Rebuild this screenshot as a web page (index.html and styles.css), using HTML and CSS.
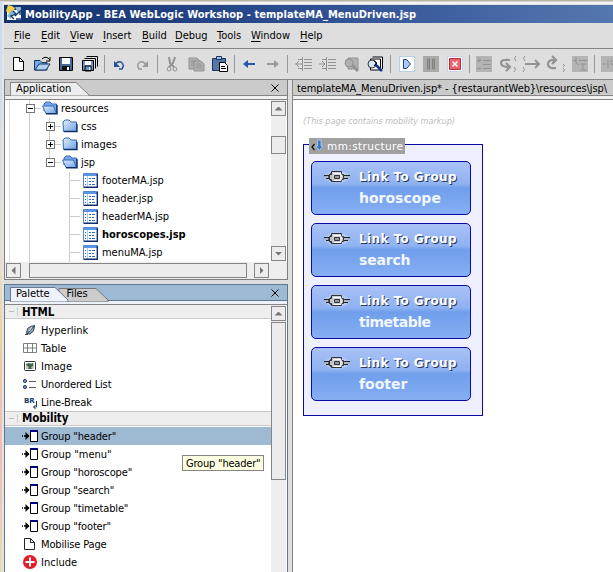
FILE: index.html
```html
<!DOCTYPE html>
<html lang="en">
<head>
<meta charset="utf-8">
<title>MobilityApp - BEA WebLogic Workshop</title>
<link rel="stylesheet" href="styles.css">
</head>
<body>
<svg class="defs" width="0" height="0">
  <defs>
    <linearGradient id="fold" x1="0" y1="0" x2="1" y2="1"><stop offset="0" stop-color="#e2efff"/><stop offset="1" stop-color="#6da0e4"/></linearGradient>
    <radialGradient id="halo"><stop offset="0" stop-color="#fff" stop-opacity=".9"/><stop offset="1" stop-color="#fff" stop-opacity="0"/></radialGradient>
    <symbol id="closed" viewBox="0 0 16 14"><path d="M1 3l2-2h4l2 2h5.500v9.500h-13z" fill="url(#fold)" stroke="#3868b4"/><path d="M2 12.500h13V5" fill="none" stroke="#102c68" stroke-width="1.300"/></symbol>
    <symbol id="open" viewBox="0 0 16 14"><path d="M2 10V3l2-2h4l2 2h4.500v9" fill="#76a7ea" stroke="#3868b4"/><path d="M.5 5h11l3 7.500H4z" fill="url(#fold)" stroke="#3868b4"/><path d="M4 12.800h11V4" fill="none" stroke="#102c68" stroke-width="1.400"/></symbol>
    <symbol id="jsp" viewBox="0 0 15 15"><path d="M.5.500h14v14H.5z" fill="#fff" stroke="#5588d0"/><path d="M1 1h13v2H1z" fill="#5a96e8"/><path d="M4.500 3v11" stroke="#a9c8f2"/><path d="M2 5.500h1m-1 3h1m-1 3h1M6 5.500h2m-2 3h2m-2 3h2M9 5.500h3m-3 3h2m-2 3h3" stroke="#2768cc"/><path d="M14.300 1v13.300H1" fill="none" stroke="#122c70" stroke-width="1.400"/></symbol>
    <symbol id="group" viewBox="0 0 18 14"><path d="M0 7h1m1 0h5" stroke="#000" stroke-width="1.500"/><path d="M3.500 3v8L7.500 7z" fill="#000"/><path d="M8.500 2v10.500h7V2" fill="#fff" stroke="#000"/><path d="M8 2h8" stroke="#000080" stroke-width="2"/></symbol>
    <symbol id="chain" viewBox="0 0 28 14"><ellipse cx="14" cy="7" rx="14" ry="7" fill="url(#halo)"/><path d="M1 5.500h8m10 0h8M3 8.500h6m10 0h6" stroke="#222"/><path d="M0 7h28" stroke="#a5a5a5"/><path d="M9.500 3.500h-2L5.500 7l2 3.500h2" fill="#aaa" stroke="#333"/><path d="M8.500 4.500v-3h10v3h2v5h-2v2h-10v-2h-2v-5z" fill="#c8cbd2" fill-opacity=".75" stroke="#333"/><path d="M10 3.500h8v7h-7" fill="none" stroke="#fff"/><path d="M11.500 5.500h5v3h-5z" fill="#999" stroke="#333"/></symbol>
  </defs>
</svg>
<div class="window">
  <header class="titlebar">
    <svg width="16" height="16" viewBox="0 0 16 16"><path d="M1 5h14v10H1z" fill="#fff"/><path d="M2 0l4 1 3 2-2 5-4 1-3-3z" fill="#f3cf45"/><path d="M9 2h6v6h-3z" fill="#8fb9de"/><path d="M6 5l5 4-4 1-2 4-4-3z" fill="#83b3dc"/><path d="M7 6l3 3-5 2 3 3m2 0h5M9 11l5-5v4" fill="none" stroke="#153d72" stroke-width="1.300"/></svg>
    <span class="window-title">MobilityApp - BEA WebLogic Workshop - templateMA_MenuDriven.jsp</span>
  </header>
  <nav class="menubar">
    <span class="m-file"><u>F</u>ile</span><span class="m-edit"><u>E</u>dit</span><span class="m-view"><u>V</u>iew</span><span class="m-insert"><u>I</u>nsert</span><span class="m-build"><u>B</u>uild</span><span class="m-debug"><u>D</u>ebug</span><span class="m-tools"><u>T</u>ools</span><span class="m-window"><u>W</u>indow</span><span class="m-help"><u>H</u>elp</span>
  </nav>
  <div class="toolbar">
    <svg class="tool" viewBox="0 0 24 24"><path d="M7.500 5.500h6l4 4v9h-10z" fill="#fff" stroke="#000"/><path d="M13.500 5.500v4h4" fill="none" stroke="#000"/></svg>
    <svg class="tool" viewBox="0 0 24 24"><path d="M4.500 18V8.500H10l2 2h5V18z" fill="#77a7e4" stroke="#15345f"/><path d="M5 18l4-6h11l-4 6z" fill="#b2d0f5" stroke="#15345f"/><path d="M12 7q4-4 8 1m0-3v4h-4" fill="none" stroke="#000"/></svg>
    <svg class="tool" viewBox="0 0 24 24"><path d="M5.500 5.500h13v13h-13z" fill="#46699c" stroke="#000"/><path d="M8 6h8v6H8z" fill="#fff"/><path d="M8 14h8v5H8z" fill="#111"/><path d="M13 15h2v3h-2z" fill="#fff"/></svg>
    <svg class="tool" viewBox="0 0 24 24"><path d="M8.500 4.500h11v10M6.500 6.500h11v10" fill="none" stroke="#000"/><path d="M4.500 8.500h11v10h-11z" fill="#7094c4" stroke="#000"/><path d="M7 9h6v4H7zM11 15h2v3h-2z" fill="#fff"/><path d="M7 14h6v5H7z" fill="none" stroke="#000"/></svg>
    <i class="sep"></i>
    <svg class="tool" viewBox="0 0 24 24"><path d="M8 13q2-4 6-3 4 3 1 7h-3" fill="none" stroke="#234e99" stroke-width="1.400"/><path d="M7 9v6h6z" fill="#234e99"/></svg>
    <svg class="tool" viewBox="0 0 24 24"><path d="M15 13q-2-4-6-3-4 3-1 7h3" fill="none" stroke="#999" stroke-width="1.500"/><path d="M17 9v6h-6z" fill="#999"/></svg>
    <i class="sep"></i>
    <svg class="tool gray" viewBox="0 0 24 24"><path d="M9 5l1 6 4 4m1-10l-2 6-4 4" stroke-width="2"/><circle cx="9" cy="17" r="2"/><circle cx="15" cy="17" r="2"/></svg>
    <svg class="tool gray" viewBox="0 0 24 24"><path class="gfill" d="M5 6h8l3 3v8H5z"/><path class="gfill" d="M10 9h7l3 3v7H10z"/><path d="M7 9h5m-5 2h3m-3 2h3m2-1h5m-5 2h6m-6 2h6"/></svg>
    <svg class="tool" viewBox="0 0 24 24"><path d="M4.500 6.500h13v12h-13z" fill="#5577a8" stroke="#15345f"/><path d="M8.500 4.500h5v3h-5z" fill="#a8c4e2" stroke="#15345f"/><path d="M11.500 10.500h5l3 3v6h-8z" fill="#fff" stroke="#000"/><path d="M13 14.500h4m-4 2h5" stroke="#000"/></svg>
    <i class="sep"></i>
    <svg class="tool" viewBox="0 0 24 24"><path d="M18 12H8" stroke="#225ab0" stroke-width="2"/><path d="M6 12l5-4v8z" fill="#225ab0"/></svg>
    <svg class="tool" viewBox="0 0 24 24"><path d="M6 12h10" stroke="#999" stroke-width="2"/><path d="M18 12l-5-4v8z" fill="#999"/></svg>
    <i class="sep wide"></i>
    <svg class="tool gray" viewBox="0 0 24 24"><path d="M6 7.500h4m2 0h8m-8 3h8m-8 3h8M6 16.500h4m2 0h8M10.500 5v14M3 12h7M7 9l-3 3 3 3"/></svg>
    <svg class="tool gray" viewBox="0 0 24 24"><path d="M6 7.500h4m2 0h8m-8 3h8m-8 3h8M6 16.500h4m2 0h8M10.500 5v14M3 12h6M6 9l3 3-3 3"/></svg>
    <svg class="tool gray" viewBox="0 0 24 24"><path class="gfill" d="M8 6h10v11H8z"/><circle class="gfill" cx="9" cy="11" r="4"/><path d="M12 13l6 6" stroke-width="3"/></svg>
    <svg class="tool" viewBox="0 0 24 24"><path d="M8.500 5h10v12M6.500 7h10v11h-10z" fill="#fff" stroke="#000"/><circle cx="8" cy="12" r="4" fill="#d7e7fa" stroke="#333"/><path d="M11 12l7 7" stroke="#16338c" stroke-width="2.500"/><path d="M10 9l3 2-3 3" fill="none" stroke="#000"/></svg>
    <i class="sep wide"></i>
    <svg class="tool" viewBox="0 0 24 24"><path d="M4.500 4.500h15v15h-15z" fill="#fff" stroke="#b7cfe2"/><path d="M8.500 7.500h3l4 4.500-4 4.500h-3z" fill="#a9cbf5" stroke="#173e87"/></svg>
    <svg class="tool" viewBox="0 0 24 24"><path d="M4 4h16v16H4z" fill="#aaa"/><path d="M8.500 7h2v10h-2zm5 0h2v10h-2z" fill="#999" stroke="#808080"/></svg>
    <svg class="tool" viewBox="0 0 24 24"><path d="M4.500 4.500h15v15h-15z" fill="#fff" stroke="#c9d4df"/><path d="M6.500 6.500h11v11h-11z" fill="#f0606d" stroke="#b92d40"/><path d="M9.500 9.500l5 5m0-5l-5 5" stroke="#fff" stroke-width="1.500"/></svg>
    <i class="sep"></i>
    <svg class="tool gray" viewBox="0 0 24 24"><path class="box" d="M4 4h16v16H4z"/><path d="M5 8.500h4m2 0h8m-8 4h8m-14 4h4m2 0h8M6 6l3 2-3 2"/></svg>
    <svg class="tool gray" viewBox="0 0 24 24"><path d="M14 8q-9-1-9 3t8 4m-3-4l4 4-4 4" stroke-width="2.200"/><path d="M20 4q-3 2 0 5m-2 6q3 2 0 5"/></svg>
    <svg class="tool gray" viewBox="0 0 24 24"><path d="M5 12h14m-4-4l4 4-4 4" stroke-width="2"/><path d="M5 4q-3 2 0 5m-2 6q3 2 0 5"/></svg>
    <svg class="tool gray" viewBox="0 0 24 24"><path d="M12 16q-8 1-8-4t8-4m-4-4l4 4-4 4" stroke-width="2.200"/><path d="M19 12q3 1 0 3m0 1q3 2 0 4"/></svg>
    <svg class="tool gray" viewBox="0 0 24 24"><path class="box" d="M4 4h16v16H4z"/><path d="M5 8.500h4m2 0h8M8 5v6l3 2m1-1h6m-3 0v6m-3 0h6"/></svg>
    <i class="sep"></i>
    <svg class="tool gray" viewBox="0 0 24 24"><path class="box" d="M4 4h16v16H4z"/><path d="M6 12h3m2-4v8m2-4h5m-5-3h5"/></svg>
  </div>
  <div class="workspace">
    <aside class="sidebar">
      <section class="pane application">
        <div class="tabs">
          <svg class="tabshape" viewBox="0 0 280 20"><path d="M5.500 20V6.500H71L84 19v1z" fill="#eee" stroke="#858585"/></svg>
          <span class="tabtext t-app">Application</span>
          <svg class="close" viewBox="0 0 8 8"><path d="M.5.500l7 7m0-7l-7 7" stroke="#000"/></svg>
        </div>
        <div class="strip"></div>
        <div class="tree-area">
          <div class="tree">
            <div class="row r1"><i class="toggle"></i><svg class="node"><use href="#open"/></svg><span>resources</span></div>
            <div class="row r2"><i class="toggle plus"></i><svg class="node"><use href="#closed"/></svg><span>css</span></div>
            <div class="row r2"><i class="toggle plus"></i><svg class="node"><use href="#closed"/></svg><span>images</span></div>
            <div class="row r2"><i class="toggle"></i><svg class="node"><use href="#open"/></svg><span>jsp</span></div>
            <div class="row r3"><svg class="page"><use href="#jsp"/></svg><span>footerMA.jsp</span></div>
            <div class="row r3"><svg class="page"><use href="#jsp"/></svg><span>header.jsp</span></div>
            <div class="row r3"><svg class="page"><use href="#jsp"/></svg><span>headerMA.jsp</span></div>
            <div class="row r3"><svg class="page"><use href="#jsp"/></svg><span class="bold">horoscopes.jsp</span></div>
            <div class="row r3"><svg class="page"><use href="#jsp"/></svg><span>menuMA.jsp</span></div>
          </div>
          <div class="vscroll"><b class="btn up"></b><b class="thumb small"></b><b class="btn down"></b></div>
        </div>
        <div class="hscroll"><b class="btn left"></b><b class="hthumb"></b><b class="btn right"></b></div>
      </section>
      <section class="pane palette">
        <div class="tabs">
          <svg class="tabshape" viewBox="0 0 280 20"><path d="M54 20V6.500h37L103 18v2z" fill="#ccc" stroke="#777"/><path d="M5.500 20V5.500H50L63 18v2z" fill="#eef2fb" stroke="#68798c"/></svg>
          <span class="tabtext t-palette">Palette</span><span class="tabtext t-files">Files</span>
          <svg class="close" viewBox="0 0 8 8"><path d="M.5.500l7 7m0-7l-7 7" stroke="#000"/></svg>
        </div>
        <div class="strip"></div>
        <div class="palette-area">
          <div class="items">
            <div class="category"><i></i><span>HTML</span></div>
            <div class="item first"><svg viewBox="0 0 18 16"><path d="M4.500 11.500l1-5 4-2.500h3l-1 5-3.500 3z" fill="#8ba0b2" stroke="#354454"/><path d="M5 12l8-9M3 12.500h3" stroke="#354454"/><path d="M7 9l3-4" stroke="#eee"/></svg><span>Hyperlink</span></div>
            <div class="item"><svg viewBox="0 0 18 16"><path d="M1.500 3.500h13v9h-13zM1.500 8h13M5.500 3.500v9m5-9v9" fill="#fff" stroke="#7a8580"/></svg><span>Table</span></div>
            <div class="item"><svg viewBox="0 0 18 16"><rect x="2.500" y="3.500" width="11" height="9" rx="1" fill="#fff" stroke="#333"/><path d="M4 5h8v6H4z" fill="#bac9bb"/><path d="M5 6l2-1 2 1 2-1v3L9 9l1 2H6l1-2-3-2z" fill="#42604b"/></svg><span>Image</span></div>
            <div class="item"><svg viewBox="0 0 18 16"><circle cx="3" cy="5" r="1.600" fill="#7992b5" stroke="#28446f"/><circle cx="3" cy="11" r="1.600" fill="#7992b5" stroke="#28446f"/><path d="M7 5.500h7m-7 6h7" stroke="#555"/></svg><span class="ul-label">Unordered List</span></div>
            <div class="item"><svg class="br" viewBox="0 0 18 16"><text x="2" y="9">BR</text><path d="M14.500 7v6h-3m2-2l-2 2 2 2" fill="none" stroke="#17396b"/></svg><span class="ul-label">Line-Break</span></div>
            <div class="category second"><i></i><span>Mobility</span></div>
            <div class="item selected"><svg class="g"><use href="#group"/></svg><span class="group">Group "header"</span></div>
            <div class="item"><svg class="g"><use href="#group"/></svg><span>Group "menu"</span></div>
            <div class="item"><svg class="g"><use href="#group"/></svg><span class="group">Group "horoscope"</span></div>
            <div class="item"><svg class="g"><use href="#group"/></svg><span class="group">Group "search"</span></div>
            <div class="item"><svg class="g"><use href="#group"/></svg><span class="group">Group "timetable"</span></div>
            <div class="item"><svg class="g"><use href="#group"/></svg><span class="group">Group "footer"</span></div>
            <div class="item"><svg viewBox="0 0 18 16"><path d="M2.500 2.500h6l4 4v7h-10zM8.500 2.500v4h4" fill="#fff" stroke="#222"/></svg><span class="group">Mobilise Page</span></div>
            <div class="item"><svg viewBox="0 0 18 16"><circle cx="8" cy="8" r="7" fill="#e31d27"/><path d="M3.500 8h9M8 3.500v9" stroke="#fff" stroke-width="2"/></svg><span>Include</span></div>
          </div>
          <div class="vscroll"><b class="btn up"></b><b class="thumb large"></b></div>
          <div class="tooltip">Group "header"</div>
        </div>
      </section>
    </aside>
    <main class="editor">
      <div class="doc-title"><span>templateMA_MenuDriven.jsp* - {restaurantWeb}\resources\jsp\</span></div>
      <div class="strip"></div>
      <div class="canvas">
        <div class="hint">(This page contains mobility markup)</div>
        <div class="structure">
          <div class="tag"><svg width="14" height="14" viewBox="0 0 14 14"><path d="M4.500 5L2 8l2.500 3m3-3H10" fill="none" stroke="#111" stroke-width="1.300"/><path d="M7.500 1h3.500v6h2l-3.700 4.500L5.500 7h2z" fill="#3979cc" stroke="#c5dafa" stroke-width=".7"/></svg><span>mm:structure</span></div>
          <div class="card"><svg><use href="#chain"/></svg><div><p>Link To Group</p><h2>horoscope</h2></div></div>
          <div class="card"><svg><use href="#chain"/></svg><div><p>Link To Group</p><h2 class="tight">search</h2></div></div>
          <div class="card"><svg><use href="#chain"/></svg><div><p>Link To Group</p><h2 class="tighter">timetable</h2></div></div>
          <div class="card"><svg><use href="#chain"/></svg><div><p>Link To Group</p><h2>footer</h2></div></div>
        </div>
      </div>
    </main>
  </div>
</div>
</body>
</html>
```

FILE: styles.css
```css
* { box-sizing: border-box; }
body { margin: 0; width: 613px; height: 572px; overflow: hidden; padding: 1px 0 0 2px; background: linear-gradient(#b9b4a8 0 1px, transparent 1px), linear-gradient(#c8dcf7, #e7e0d0 45%, #eed29b 58%, #f1bbb8 78%, #e4dfae); font: 11px "DejaVu Sans Condensed", "DejaVu Sans", sans-serif; font-stretch: condensed; color: #000; }
.defs { position: absolute; }
span, .tooltip, .hint { white-space: nowrap; }
.window { height: 571px; background: #dedede; border-left: 2px solid #e4e4e4; border-top: 1px solid #d4d0c8; padding-top: 3px; box-shadow: inset 0 2px #f4f4f4; }
.titlebar { height: 18px; display: flex; align-items: center; gap: 3px; padding-left: 2px; background: linear-gradient(90deg, #12316f, #2d4e91 50%, #5577b0); color: #fff; }
.titlebar svg { margin-top: -2px; }
.window-title { font-weight: bold; font-size: 11px; letter-spacing: .06px; }
.menubar { height: 26px; display: flex; align-items: center; padding-left: 10px; border-bottom: 1px solid #858585; }
.menubar u { text-underline-offset: 2px; }
.m-file { width: 27px; } .m-edit { width: 29px; } .m-view { width: 33px; } .m-insert { width: 39px; } .m-build { width: 33px; } .m-debug { width: 42px; } .m-tools { width: 34px; } .m-window { width: 49px; }
.toolbar { height: 31px; display: flex; align-items: center; padding-left: 2px; overflow: hidden; border-bottom: 1px solid #858585; }
.tool { width: 24px; height: 24px; flex: none; fill: none; }
.gray { stroke: #939393; } .gray .gfill { fill: #b0b0b0; } .gray .box { fill: #b4b4b4; stroke: none; }
.sep { width: 1px; height: 18px; flex: none; margin: 0 2px; background: #999; }
.sep.wide { margin-right: 4px; }
.workspace { display: flex; height: 492px; }
.sidebar { width: 284px; flex: none; }
.pane { border: 1px solid #7e7e7e; border-top: 0; }
.application { height: 200px; background: #eee; }
.palette { height: 288px; margin-top: 4px; border-color: #60758e; border-top: 1px solid #60758e; }
.tabs { height: 16px; position: relative; display: flex; align-items: center; background: #cbcbcb; border-bottom: 1px solid #858585; }
.palette .tabs { background: #9db9d3; border-color: #60758e; }
.tabshape { position: absolute; left: 0; top: -4px; width: 280px; height: 20px; }
.palette .tabshape { top: -3px; }
.tabtext { position: relative; padding-top: 2px; }
.t-app { margin-left: 11px; } .t-palette { margin-left: 11px; letter-spacing: -.1px; } .t-files { margin-left: 17px; letter-spacing: -.1px; }
.close { width: 8px; height: 8px; margin-left: auto; margin-right: 8px; }
.strip { height: 4px; background: #f1f1f1; border-bottom: 1px solid #858585; }
.palette .strip { background: #edf1fa; }
.tree-area { height: 162px; display: flex; background: #fff; overflow: hidden; }
.tree { width: 266px; background: linear-gradient(#ddd, #ddd) 4px 0/1px 100% no-repeat, linear-gradient(#ccc, #ccc) 24px 0/1px 100% no-repeat, linear-gradient(#ccc, #ccc) 44px 18px/1px 40px no-repeat, linear-gradient(#ccc, #ccc) 64px 72px/1px 100% no-repeat; }
.row { height: 18px; display: flex; align-items: center; gap: 4px; margin-top: -1px; margin-bottom: 1px; }
.row span { letter-spacing: -.02px; }
.row.r1 { padding-left: 21px; } .row.r2 { padding-left: 41px; } .row.r3 { padding-left: 64px; }
.row.r3::before { content: ""; width: 11px; height: 1px; background: #ccc; margin-right: -1px; }
.toggle { width: 9px; height: 9px; border: 1px solid #777; background: linear-gradient(#000, #000) center/5px 1px no-repeat, #fff; position: relative; }
.toggle::after { content: ""; position: absolute; left: 8px; top: 3px; width: 6px; height: 1px; background: #ccc; }
.plus { background: linear-gradient(#000, #000) center/5px 1px no-repeat, linear-gradient(#000, #000) center/1px 5px no-repeat, #fff; }
.node { width: 16px; height: 14px; margin-left: 3px; margin-right: -1px; }
.page { width: 15px; height: 15px; }
.bold { font-weight: bold; }
.vscroll { width: 15px; flex: none; background: #eee; display: flex; flex-direction: column; padding-top: 1px; }
.btn { width: 15px; height: 15px; border: 1px solid #858585; background: #ececec; flex: none; display: grid; place-items: center; }
.btn::after { content: ""; width: 8px; height: 4px; background: #777; clip-path: polygon(50% 0, 100% 100%, 0 100%); }
.down::after { clip-path: polygon(0 0, 100% 0, 50% 100%); }
.left::after { width: 4px; height: 8px; clip-path: polygon(0 50%, 100% 0, 100% 100%); }
.right::after { width: 4px; height: 8px; clip-path: polygon(0 0, 100% 50%, 0 100%); }
.thumb { border: 1px solid #858585; background: #ececec; }
.small { height: 18px; margin-top: 20px; }
.down { margin-top: auto; margin-bottom: 1px; }
.large { height: 158px; margin-top: 1px; }
.hscroll { display: flex; height: 17px; padding: 1px; background: #eee; }
.hthumb { width: 218px; margin: 0 7px 0 8px; border: 1px solid #858585; background: #ececec; }
.palette-area { height: 267px; display: flex; position: relative; overflow: hidden; background: #fff; }
.items { width: 266px; }
.category { height: 14px; display: flex; align-items: center; background: #eee; border-bottom: 1px solid #c9c9c9; font-weight: bold; font-size: 11.500px; }
.category i { width: 13px; height: 9px; margin-right: 4px; border-right: 1px solid #ccc; background: linear-gradient(#bbb, #bbb) 4px 4px/5px 1px no-repeat; }
.category span { line-height: 13px; padding-top: 1px; letter-spacing: -.1px; }
.second { height: 15px; border-top: 1px solid #c9c9c9; margin-bottom: 1px; }
.second span { padding-top: 0; }
.item { height: 18px; display: flex; align-items: center; gap: 1px; padding-left: 17px; }
.item svg { width: 18px; height: 16px; flex: none; }
.item.first { margin-top: 2px; }
.item svg.g { height: 14px; }
.ul-label, .group { letter-spacing: -.15px; }
.br text { font: bold 7px "DejaVu Sans", sans-serif; fill: #17396b; }
.selected { background: #9eb9d2; }
.tooltip { position: absolute; left: 177px; top: 150px; width: 82px; height: 16px; border: 1px solid #858585; background: #ffffe1; padding-left: 3px; line-height: 15px; letter-spacing: -.2px; }
.editor { flex: none; width: 321px; margin-left: 4px; border-left: 1px solid #858585; background: #fff; }
.doc-title { height: 16px; background: #cbcbcb; border-bottom: 1px solid #858585; padding-left: 4px; line-height: 17px; overflow: hidden; letter-spacing: -.08px; }
.canvas { padding: 15px 0 0 10px; }
.hint { height: 12px; font: italic 8.130px/12px "DejaVu Sans", sans-serif; color: #bcbcbc; }
.structure { position: relative; margin-top: 17px; width: 180px; height: 272px; border: 1px solid #0a0aa8; background: #eeefff; padding: 16px 0 0 7px; }
.tag { position: absolute; left: 5px; top: -7px; width: 96px; height: 16px; background: #a0a0a0; color: #fff; display: flex; align-items: center; gap: 3px; padding-left: 1px; font: 10.500px "DejaVu Sans", sans-serif; letter-spacing: .4px; }
.card { width: 160px; height: 54px; border: 1px solid #0a0aa8; border-radius: 5px; background: linear-gradient(#a9c1f6, #8fb2f1 42%, #6f9fec 50%, #86aef3); margin-bottom: 8px; display: flex; color: #fff; }
.card svg { width: 28px; height: 14px; margin: 8px 8px 0 11px; flex: none; }
.card p { margin: 7px 0 0; font: bold 12px/16px "DejaVu Sans", sans-serif; letter-spacing: .42px; text-shadow: 1px 1px 0 #26365c; white-space: nowrap; }
.card h2 { margin: 5px 0 0; font: bold 14px/17px "DejaVu Sans", sans-serif; color: #f2f7ff; }
.card .tight { letter-spacing: -.2px; }
.card .tighter { letter-spacing: -.5px; }
```
